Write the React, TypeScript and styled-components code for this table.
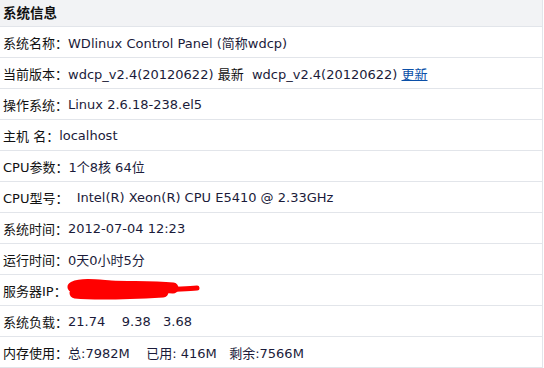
import React from "react";
import styled, { createGlobalStyle } from "styled-components";

const GlobalStyle = createGlobalStyle`
  html, body {
    margin: 0;
    padding: 0;
    background: #ffffff;
  }
  body {
    font-family: "DejaVu Sans", Verdana, "Noto Sans CJK SC", sans-serif;
  }
`;

interface IInfoRow {
  label: string;
  value: React.ReactNode;
}

const StyledPanel = styled.div`
  width: 542px;
  border-right: 1px solid #e2e5ea;
  font-size: 13px;
  color: #222;
`;

const StyledTitle = styled.div`
  height: 26px;
  line-height: 24px;
  padding-left: 3px;
  background: #f2f3f5;
  border-bottom: 1px solid #e2e5ea;
  font-family: "Noto Sans CJK SC", sans-serif;
  font-weight: 700;
  font-size: 13.5px;
  color: #111;
`;

const StyledRow = styled.div`
  display: flex;
  align-items: center;
  height: 30px;
  padding-left: 3px;
  border-bottom: 1px solid #e2e5ea;
  white-space: pre;

  .row_label {
    color: #111;
  }

  .row_value {
    color: #1b1b3a;
  }
`;

const Plain = styled.span`
  color: #111;
`;

const UpdateLink = styled.a`
  color: #0b50a8;
  text-decoration: underline;
`;

// red marker stroke hiding the server address
const Scribble = () => (
  <svg width="134" height="22" viewBox="0 0 134 22" style={{ verticalAlign: "middle" }}>
    <path
      d="M6 8 C16 4 30 6 44 7 C64 8 84 7 106 9 M8 14 C30 16 60 15 96 13"
      stroke="#ff0000"
      strokeWidth="11"
      strokeLinecap="round"
      fill="none"
    />
    <path d="M98 11 C110 10 120 10 130 9" stroke="#ff0000" strokeWidth="5" strokeLinecap="round" fill="none" />
  </svg>
);

const rows: IInfoRow[] = [
  { label: "系统名称：", value: "WDlinux Control Panel (简称wdcp)" },
  {
    label: "当前版本：",
    value: (
      <>
        wdcp_v2.4(20120622) <Plain>最新</Plain>{"\u00a0 "}wdcp_v2.4(20120622) <UpdateLink href="#">更新</UpdateLink>
      </>
    ),
  },
  { label: "操作系统：", value: "Linux 2.6.18-238.el5" },
  { label: "主机 名：", value: "localhost" },
  { label: "CPU参数：", value: "1个8核 64位" },
  { label: "CPU型号：", value: "\u00a0 Intel(R) Xeon(R) CPU E5410 @ 2.33GHz" },
  { label: "系统时间：", value: "2012-07-04 12:23" },
  { label: "运行时间：", value: "0天0小时5分" },
  { label: "服务器IP：", value: <Scribble /> },
  { label: "系统负载：", value: "21.74\u00a0\u00a0\u00a0 9.38\u00a0\u00a0 3.68" },
  { label: "内存使用：", value: "总:7982M\u00a0\u00a0\u00a0 已用: 416M\u00a0\u00a0 剩余:7566M" },
];

export default function App() {
  return (
    <>
      <GlobalStyle />
      <StyledPanel>
        <StyledTitle>系统信息</StyledTitle>
        {rows.map((row, index) => (
          <StyledRow key={index}>
            <span className="row_label">{row.label}</span>
            <span className="row_value">{row.value}</span>
          </StyledRow>
        ))}
      </StyledPanel>
    </>
  );
}
